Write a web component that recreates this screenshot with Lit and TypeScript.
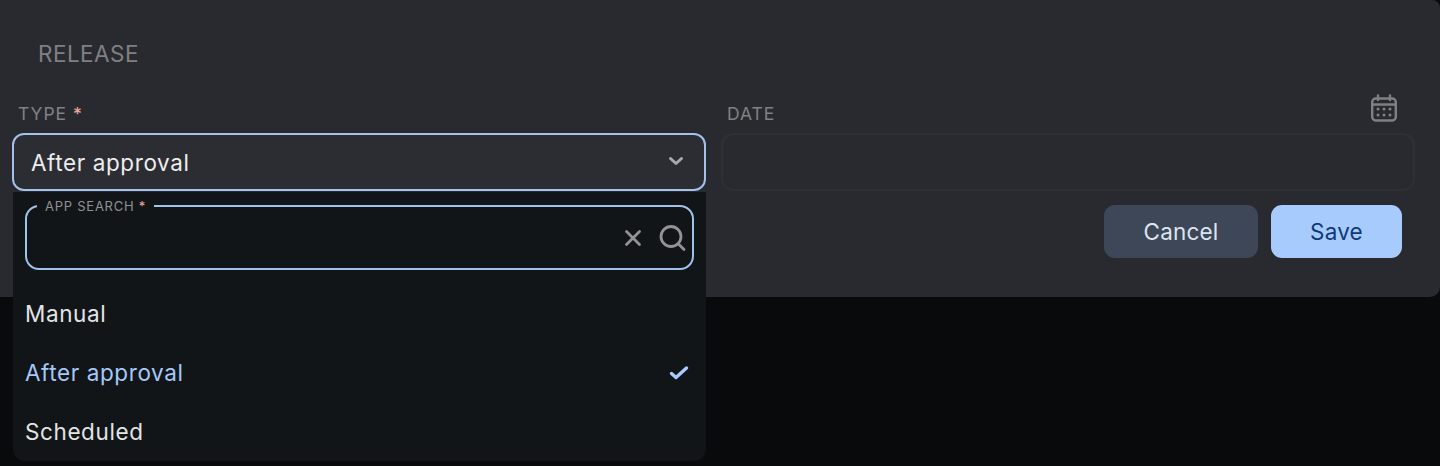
import { LitElement, html, css } from "lit";
import { customElement } from "lit/decorators.js";

@customElement("app-root")
export class AppRoot extends LitElement {
  static styles = css`
    :host {
      display: block;
      width: 1440px;
      height: 466px;
      overflow: hidden;
      background: #090a0c;
      font-family: Inter, "Liberation Sans", sans-serif;
    }
    .panel {
      box-sizing: border-box;
      height: 297px;
      background: #292a2f;
      border-radius: 0 8px 10px 0;
      padding: 42px 25px 0 12px;
    }
    .title {
      margin: 0 0 0 26px;
      height: 25px;
      line-height: 23px;
      font-size: 22.5px;
      font-weight: 400;
      letter-spacing: 0.45px;
      color: #7f8084;
    }
    .fields {
      display: grid;
      grid-template-columns: 694px 694px;
      column-gap: 15px;
      margin-top: 34px;
    }
    .field {
      position: relative;
    }
    .label-row {
      height: 25px;
      margin-bottom: 7px;
      line-height: 25px;
      font-size: 17.5px;
      letter-spacing: 0.95px;
      color: #808185;
      padding-left: 6px;
    }
    .star {
      color: #f4a9a0;
      margin-left: 0;
    }
    .select {
      box-sizing: border-box;
      height: 58px;
      border: 2px solid #a3c2ea;
      border-radius: 12px;
      background: #2c2d33;
      display: flex;
      align-items: center;
      justify-content: space-between;
      padding: 0 18px 0 17px;
      font-size: 22.5px;
      letter-spacing: 0.6px;
      color: #eceded;
    }
    .date-input {
      box-sizing: border-box;
      height: 58px;
      border: 2px solid #2f3036;
      border-radius: 12px;
    }
    .cal {
      position: absolute;
      right: 17px;
      top: -7px;
      width: 28px;
      height: 28px;
      display: block;
    }
    .actions {
      display: flex;
      justify-content: flex-end;
      gap: 13px;
      margin-top: 14px;
      margin-right: 13px;
    }
    button {
      height: 53px;
      border: 0;
      border-radius: 11px;
      font: inherit;
      font-size: 22.5px;
      letter-spacing: 0.2px;
      padding: 0;
    }
    .cancel {
      width: 154px;
      background: #3e4758;
      color: #dce4f0;
    }
    .save {
      width: 131px;
      background: #a8cbfe;
      color: #0f3a75;
    }
    .menu {
      position: absolute;
      left: 1px;
      top: 91px;
      width: 693px;
      height: 269px;
      box-sizing: border-box;
      background: #111518;
      border-radius: 0 0 12px 12px;
      padding: 13px 12px 0 12px;
      z-index: 2;
    }
    .search {
      position: relative;
      box-sizing: border-box;
      height: 65px;
      border: 2px solid #a3c2ea;
      border-radius: 14px;
      display: flex;
      align-items: center;
      justify-content: flex-end;
      gap: 15px;
      padding: 0 6px 0 0;
    }
    .legend {
      position: absolute;
      left: 10px;
      top: -9px;
      height: 16px;
      line-height: 16px;
      padding: 0 8px;
      background: #111518;
      font-size: 13px;
      letter-spacing: 0.75px;
      color: #8f9194;
    }
    .search svg,
    .select svg,
    .check {
      display: block;
      flex: none;
    }
    .select svg {
      position: relative;
      top: -1px;
    }
    .options {
      margin: 14px 0 0 0;
      padding: 0;
      list-style: none;
    }
    .options li {
      height: 59px;
      display: flex;
      align-items: center;
      justify-content: space-between;
      font-size: 22.5px;
      letter-spacing: 0.6px;
      color: #e3e4e5;
      padding-right: 5px;
    }
    .options li.selected {
      color: #a6c8f8;
    }
  `;

  render() {
    return html`
      <div class="panel">
        <h2 class="title">RELEASE</h2>
        <div class="fields">
          <div class="field">
            <div class="label-row">TYPE <span class="star">*</span></div>
            <div class="select">
              <span>After approval</span>
              <svg width="20" height="20" viewBox="0 0 20 20" fill="none" stroke="#a8a9ab" stroke-width="3" stroke-linecap="round" stroke-linejoin="round">
                <path d="M4.5 7.5 10 12.5 15.5 7.5" />
              </svg>
            </div>
            <div class="menu">
              <div class="search">
                <span class="legend">APP SEARCH <span class="star">*</span></span>
                <svg width="20" height="20" viewBox="0 0 20 20" fill="none" stroke="#929395" stroke-width="2.8" stroke-linecap="round">
                  <path d="M3.5 3.5 16.5 16.5M16.5 3.5 3.5 16.5" />
                </svg>
                <svg width="28" height="28" viewBox="0 0 28 28" fill="none" stroke="#929395" stroke-width="2.8" stroke-linecap="round">
                  <circle cx="13" cy="12.5" r="10" />
                  <path d="M20.5 20 26 25.5" />
                </svg>
              </div>
              <ul class="options">
                <li>Manual</li>
                <li class="selected">
                  <span>After approval</span>
                  <svg class="check" width="20" height="16" viewBox="0 0 20 16" fill="none" stroke="#a8cbfe" stroke-width="3.4" stroke-linecap="round" stroke-linejoin="round">
                    <path d="M2.5 8.5 7 12.5 17.5 3" />
                  </svg>
                </li>
                <li>Scheduled</li>
              </ul>
            </div>
          </div>
          <div class="field date">
            <div class="label-row">DATE</div>
            <svg class="cal" viewBox="0 0 28 28" fill="none" stroke="#7f8084" stroke-width="2.4" stroke-linecap="round" stroke-linejoin="round">
              <rect x="2.2" y="4.5" width="23.6" height="22" rx="3.5" />
              <path d="M2.2 10.5H25.8M8 1.5V6M20 1.5V6" />
              <g fill="#7f8084" stroke="none">
                <circle cx="8" cy="15" r="1.5" /><circle cx="14" cy="15" r="1.5" /><circle cx="20" cy="15" r="1.5" />
                <circle cx="8" cy="21" r="1.5" /><circle cx="14" cy="21" r="1.5" /><circle cx="20" cy="21" r="1.5" />
              </g>
            </svg>
            <div class="date-input"></div>
          </div>
        </div>
        <div class="actions">
          <button class="cancel">Cancel</button>
          <button class="save">Save</button>
        </div>
      </div>
    `;
  }
}
